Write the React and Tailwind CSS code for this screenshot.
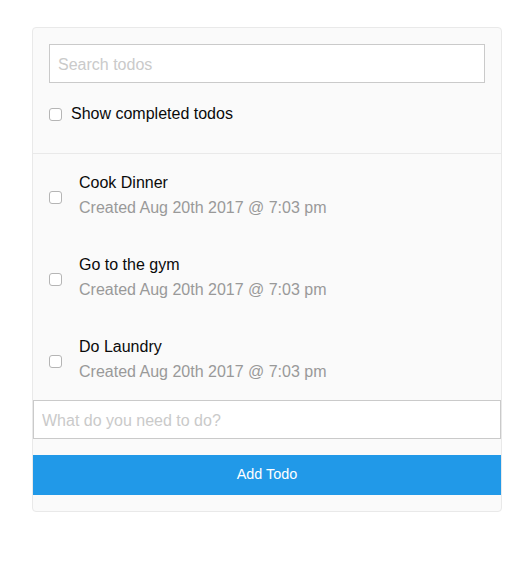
import React from "react";

const todos = [
  { title: "Cook Dinner", created: "Created Aug 20th 2017 @ 7:03 pm" },
  { title: "Go to the gym", created: "Created Aug 20th 2017 @ 7:03 pm" },
  { title: "Do Laundry", created: "Created Aug 20th 2017 @ 7:03 pm" },
];

function Box() {
  return (
    <span className="block w-[13px] h-[13px] shrink-0 rounded-[3px] border border-[#b5b5b5] bg-white" />
  );
}

export default function App() {
  return (
    <div
      className="min-h-[577px] w-full bg-white pt-[27px]"
      style={{ fontFamily: '"Liberation Sans", Arial, sans-serif' }}
    >
      <div className="mx-[32px] w-[470px] rounded-[4px] border border-[#e9e9e9] bg-[#fafafa] text-[#0a0a0a]">
        <div className="border-b border-[#e9e9e9] px-[16px] pt-[16px] pb-[25px]">
          <input
            type="text"
            placeholder="Search todos"
            className="block h-[39px] w-full border border-[#cacaca] bg-white px-[8px] pt-[2px] text-[16px] outline-none placeholder:text-[#cacaca]"
          />
          <label className="mt-[17px] flex h-[28px] items-start gap-[9px]">
            <span className="mt-[8px]"><Box /></span>
            <span className="text-[16px] leading-[28px]">Show completed todos</span>
          </label>
        </div>
        <div>
          {todos.map((t) => (
            <div key={t.title} className="flex items-center gap-[17px] px-[16px] py-[16px] h-[82px]">
              <span className="mt-[4px]"><Box /></span>
              <div>
                <div className="text-[16px] leading-[24px]">{t.title}</div>
                <div className="text-[16px] leading-[25px] text-[#999]">{t.created}</div>
              </div>
            </div>
          ))}
        </div>
        <div className="pb-[16px]">
          <input
            type="text"
            placeholder="What do you need to do?"
            className="block h-[39px] w-full border border-[#cacaca] bg-white px-[8px] pt-[2px] text-[16px] outline-none placeholder:text-[#cacaca]"
          />
          <button className="mt-[16px] block h-[40px] w-full bg-[#2199e8] text-[14.4px] text-white">
            Add Todo
          </button>
        </div>
      </div>
    </div>
  );
}
